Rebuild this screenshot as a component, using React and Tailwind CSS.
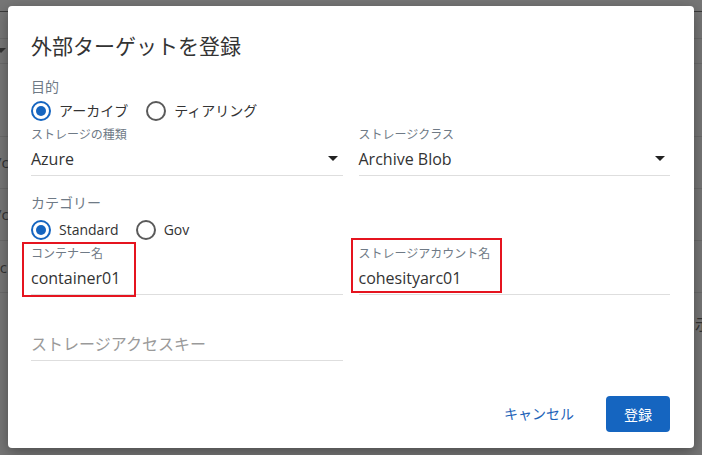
import React from "react";

const FONT = { fontFamily: '"Open Sans", "Noto Sans CJK JP", sans-serif' };

function Radio({ checked, label }) {
  return (
    <div className="flex items-center">
      <div
        className={`w-[20px] h-[20px] rounded-full border-2 flex items-center justify-center ${
          checked ? "border-[#1565c0]" : "border-[#5a5a5a]"
        }`}
      >
        {checked && <div className="w-[10px] h-[10px] rounded-full bg-[#1565c0]" />}
      </div>
      <span className="ml-[8px] text-[14px] leading-[24px] text-[#333]">{label}</span>
    </div>
  );
}

function Caret() {
  return (
    <svg width="10" height="5" viewBox="0 0 10 5" className="mr-[5px] mt-[9px]">
      <path d="M0 0 L10 0 L5 5 Z" fill="#222" />
    </svg>
  );
}

function Field({ label, value, select, boxed }) {
  return (
    <div className="relative flex flex-col">
      <div className="h-[16px] text-[12px] leading-[16px] text-[#6f7a86]">{label}</div>
      <div className="mt-[4px] h-[29px] border-b border-[#dedede] flex items-start justify-between">
        <span className="text-[16px] leading-[24px] text-[#333]">{value}</span>
        {select && <Caret />}
      </div>
      {boxed}
    </div>
  );
}

export default function App() {
  return (
    <div className="w-[702px] h-[455px] relative overflow-hidden bg-[#767676]" style={FONT}>
      {/* backdrop page content */}
      <div className="absolute inset-0">
        <div className="absolute left-0 right-0 top-[11px] h-[1px] bg-[#3a3a3a]" />
        <div className="absolute left-0 right-0 top-[38px] h-[1px] bg-[#6a6a6a]" />
        <div className="absolute left-0 right-0 top-[63px] h-[1px] bg-[#6a6a6a]" />
        <div className="absolute left-0 right-0 top-[136px] h-[1px] bg-[#6a6a6a]" />
        <div className="absolute left-0 right-0 top-[188px] h-[1px] bg-[#6a6a6a]" />
        <div className="absolute left-0 right-0 top-[240px] h-[1px] bg-[#6a6a6a]" />
        <div className="absolute left-0 right-0 top-[292px] h-[1px] bg-[#6a6a6a]" />
        <div className="absolute left-[-4px] top-[48px] w-0 h-0 border-l-[5px] border-r-[5px] border-t-[5px] border-l-transparent border-r-transparent border-t-[#333]" />
        <div className="absolute left-[-4px] top-[151px] text-[15px] text-[#333]">/c</div>
        <div className="absolute left-[-4px] top-[203px] text-[15px] text-[#333]">/c</div>
        <div className="absolute left-[-4px] top-[256px] text-[15px] text-[#333]">lc</div>
        <div className="absolute left-[695px] top-[313px] text-[15px] text-[#333]">示</div>
      </div>

      {/* dialog */}
      <div className="absolute left-[8px] top-[6px] w-[686px] h-[442px] bg-white rounded-[4px] shadow-[0_4px_14px_rgba(0,0,0,0.35)] flex flex-col pl-[23px] pr-[24px] pt-[26px]">
        <div className="h-[28px] text-[21px] leading-[28px] text-[#333]">外部ターゲットを登録</div>

        <div className="mt-[17px] h-[20px] text-[14px] leading-[20px] text-[#6f7a86]">目的</div>
        <div className="mt-[2px] h-[24px] flex gap-[18px]">
          <Radio checked label="アーカイブ" />
          <Radio label="ティアリング" />
        </div>

        <div className="mt-[4px] grid grid-cols-2 gap-x-[16px]">
          <Field label="ストレージの種類" value="Azure" select />
          <Field label="ストレージクラス" value="Archive Blob" select />
        </div>

        <div className="mt-[17px] h-[20px] text-[14px] leading-[20px] text-[#6f7a86]">カテゴリー</div>
        <div className="mt-[5px] h-[24px] flex gap-[17px]">
          <Radio checked label="Standard" />
          <Radio label="Gov" />
        </div>

        <div className="mt-[4px] grid grid-cols-2 gap-x-[16px]">
          <Field
            label="コンテナー名"
            value="container01"
            boxed={<div className="absolute left-[-9px] top-[-4px] w-[114px] h-[55px] border-2 border-[#e5141f]" />}
          />
          <Field
            label="ストレージアカウント名"
            value="cohesityarc01"
            boxed={<div className="absolute left-[-8px] top-[-8px] w-[151px] h-[55px] border-2 border-[#e5141f]" />}
          />
        </div>

        <div className="mt-[37px] grid grid-cols-2 gap-x-[16px]">
          <div className="h-[29px] border-b border-[#dedede]">
            <span className="text-[16px] leading-[24px] text-[#9a9a9a]">ストレージアクセスキー</span>
          </div>
        </div>

        <div className="mt-auto mb-[16px] flex justify-end items-center">
          <button className="mr-[32px] text-[14px] leading-[20px] text-[#1e63b8]">キャンセル</button>
          <button className="w-[64px] h-[36px] rounded-[4px] bg-[#1565c0] text-white text-[14px]">登録</button>
        </div>
      </div>
    </div>
  );
}
